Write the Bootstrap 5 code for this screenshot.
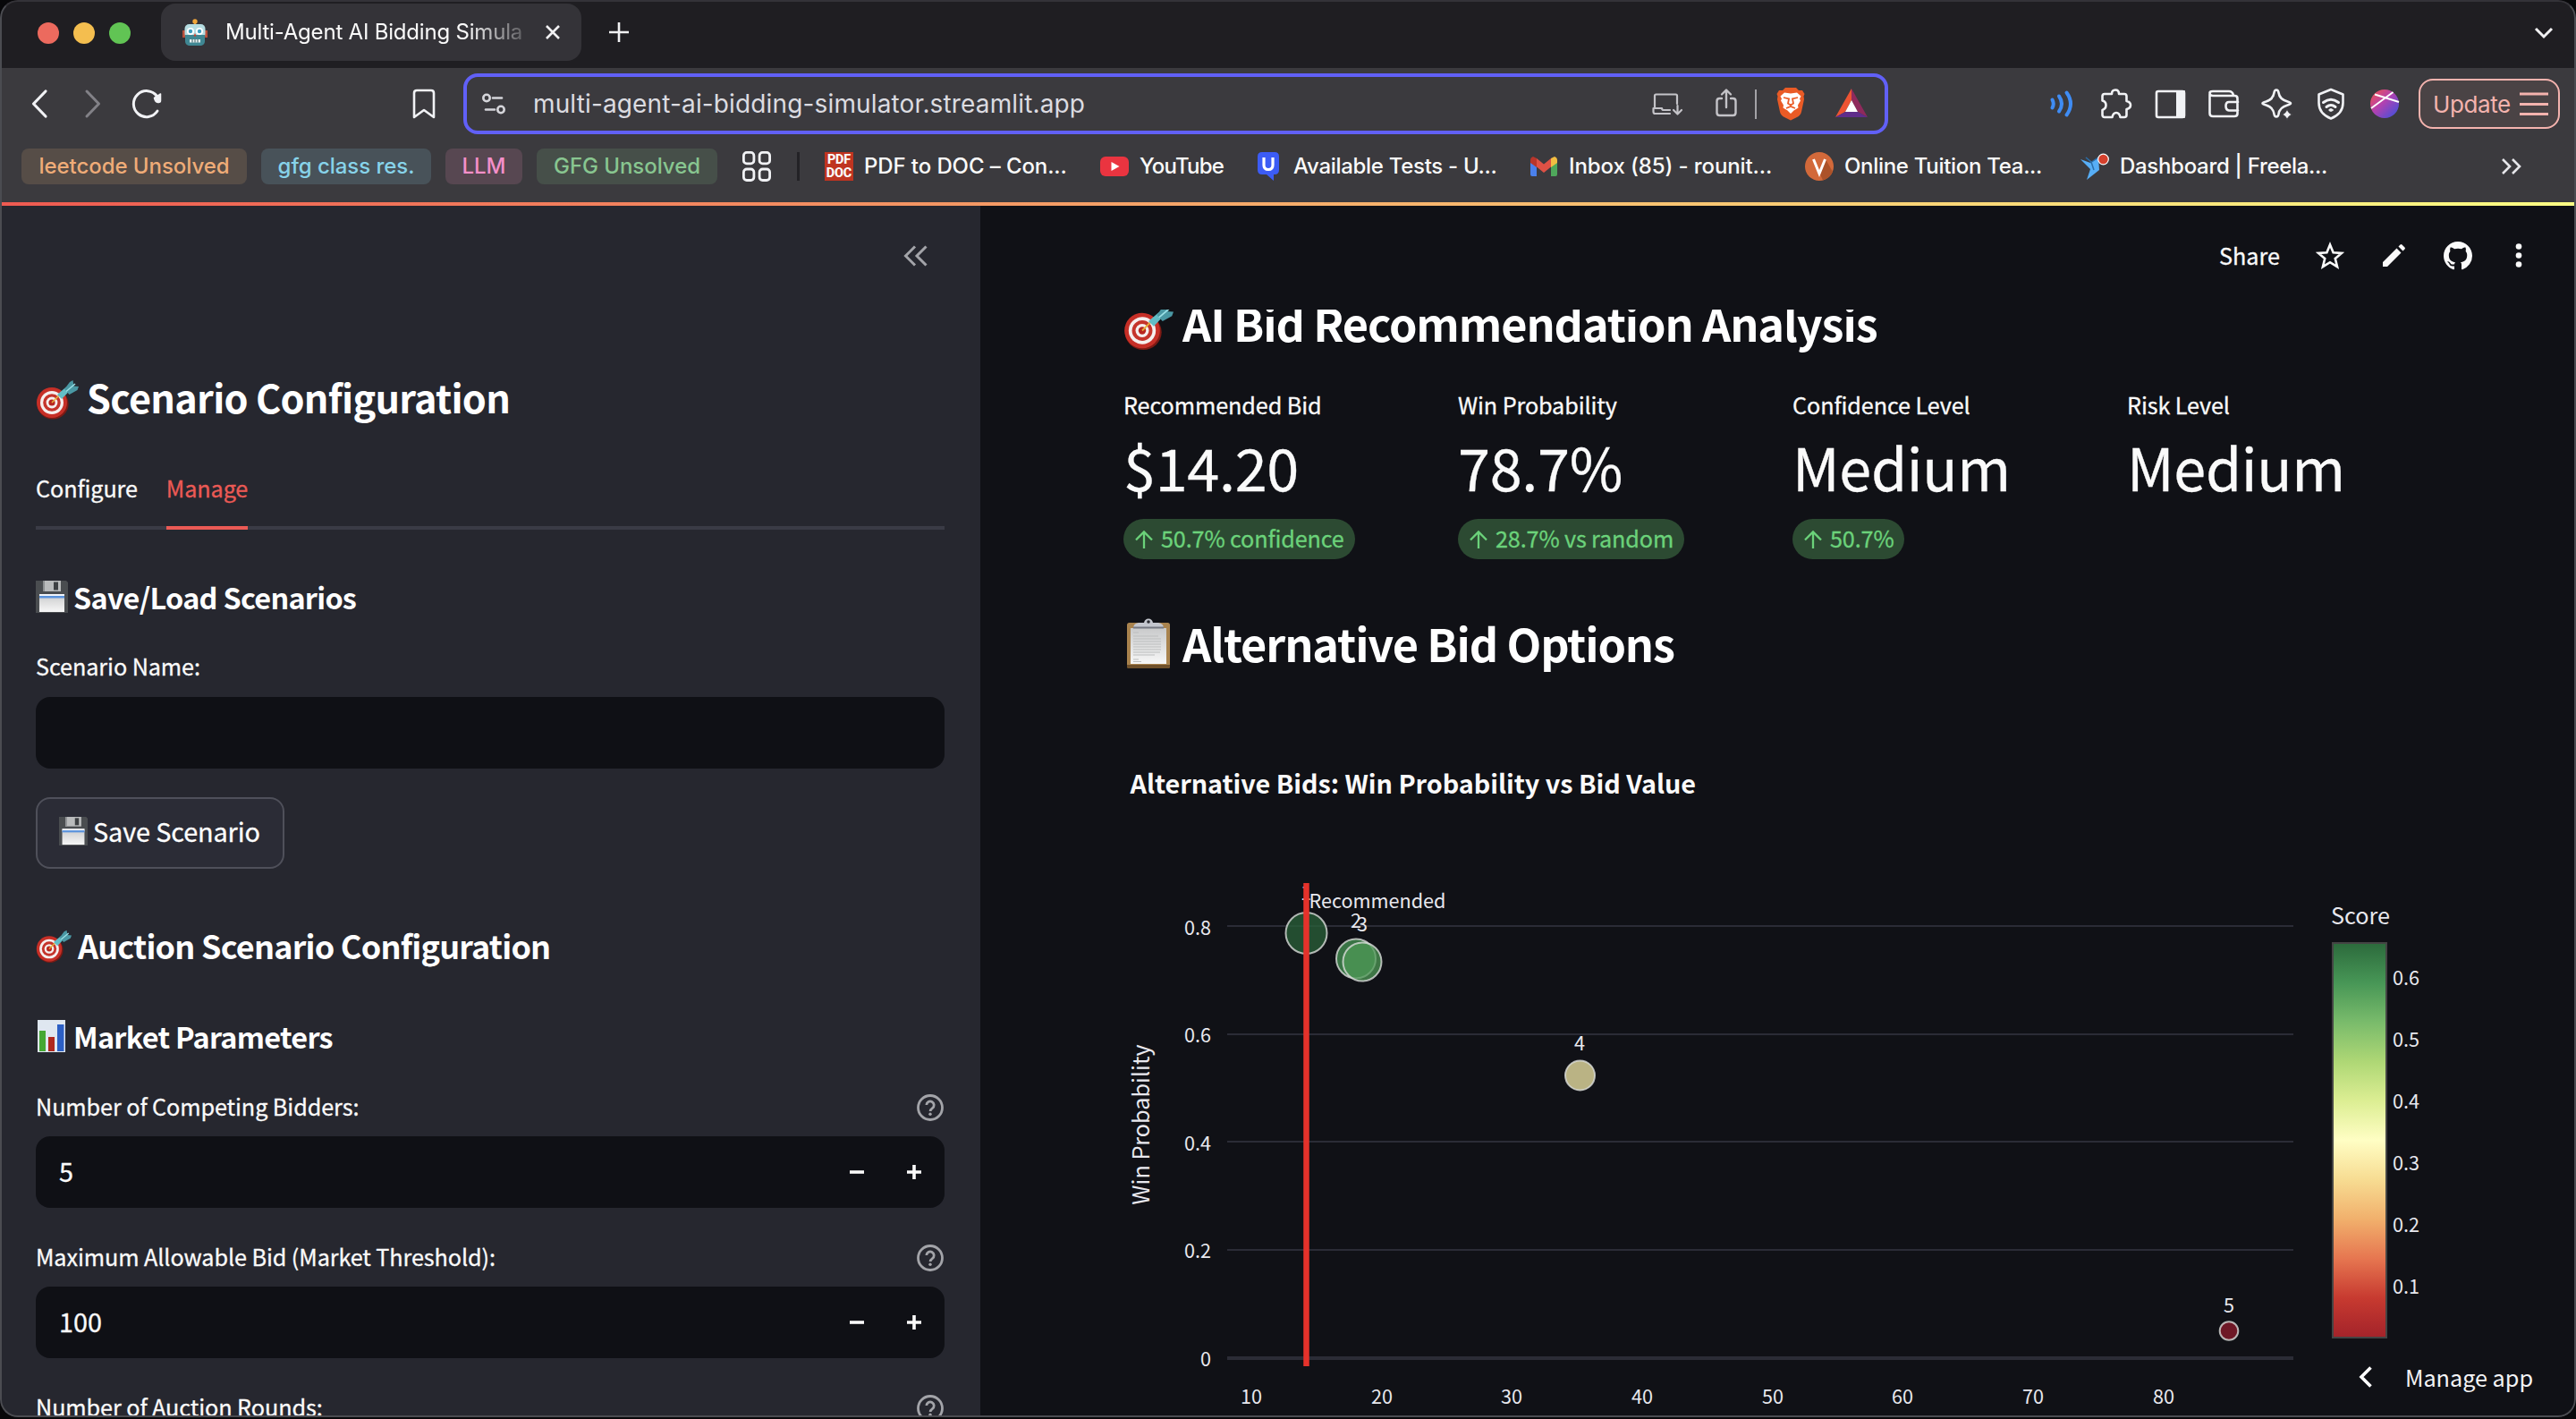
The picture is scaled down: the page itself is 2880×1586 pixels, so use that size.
<!DOCTYPE html>
<html lang="en" data-bs-theme="dark">
<head>
<meta charset="utf-8">
<title>Multi-Agent AI Bidding Simulator</title>
<link href="https://cdn.jsdelivr.net/npm/bootstrap@5.3.0/dist/css/bootstrap.min.css" rel="stylesheet">
<style>
:root{--ui:Inter,"Liberation Sans",sans-serif;--app:"Noto Sans CJK SC","Noto Sans",sans-serif}
body{background:#08080a;width:2880px;height:1586px;overflow:hidden;font-family:var(--app);color:#fafafa}
svg{display:block;flex:none}
.browser{height:1584px;border-radius:20px;overflow:hidden;background:#101116}
.browser::after{content:"";position:absolute;inset:0;border:2px solid #4b4c51;border-top-color:#343338;border-radius:20px;pointer-events:none}
.ic{width:40px;height:40px;fill:none;stroke:#f1f2f5;stroke-width:2.6;stroke-linecap:round;stroke-linejoin:round}
/* tab strip */
.tabstrip{height:76px;background:#1f1e22;font-family:var(--ui);padding-left:42px}
.dots{height:74px;gap:16px}
.dot{width:24px;height:24px;border-radius:50%}
.tab{width:470px;height:64px;border-radius:16px;background:#343338;margin:4px 0 4px 34px;padding-left:24px}
.tabtitle{width:338px;margin-left:20px;font-size:24px;letter-spacing:-.2px;white-space:nowrap;overflow:hidden;-webkit-mask-image:linear-gradient(90deg,#000 80%,rgba(0,0,0,.15));mask-image:linear-gradient(90deg,#000 80%,rgba(0,0,0,.15))}
/* toolbar */
.toolbar{height:150px;background:#3b3a3e;font-family:var(--ui)}
.navrow{height:80px;padding:0 18px 0 24px}
.navset{gap:20px}
.markbtn{margin:0 24px 0 270px}
.urlbox{width:1593px;height:68px;border:4px solid #6160f7;border-radius:16px;padding:0 17px 0 10px}
.url{font-size:28px;letter-spacing:.14px;color:#dcdce1;margin-left:24px;white-space:nowrap}
.sep{width:2px;height:33px;background:#a3a2a7;margin:0 18px 0 12px}
.updatebtn{width:158px;height:56px;border:2px solid #f4b3ae;border-radius:16px;background:#4a4345;color:#f4b3ae;font-size:26px;letter-spacing:-.4px;margin-left:18px;padding:0 10px 0 14px}
.marks{height:60px;padding-left:24px;font-size:24px;font-weight:500;letter-spacing:-.3px;white-space:nowrap}
.chip{height:40px;border-radius:8px;letter-spacing:-.05px;margin-right:16px}
.c1{width:252px;background:#564d47;color:#efac78}
.c2{width:190px;background:#485259;color:#87d3ea}
.c3{width:86px;background:#574751;color:#f48fc9}
.c4{width:202px;background:#464f49;color:#88c690;margin-right:28px}
.bar{width:3px;height:32px;background:#232226;margin:0 28px 0 29px}
.bm{width:308px;gap:12px}
.bm-s{width:172px;letter-spacing:-.8px}
.bm-w{letter-spacing:-.1px}
.pdf{width:32px;height:32px;background:#bf3420;font:800 14.5px/15px Roboto,sans-serif;letter-spacing:-.2px;text-align:center;padding-top:1px}
.rainbow{height:4px;background:linear-gradient(90deg,#ee5a51,#ffff84)}
/* sidebar */
.side{width:1096px;background:#26272f;padding:0 40px;-webkit-text-stroke:.3px}
.collapse-row{height:112px;padding-right:18px}
.h-a,.h-b,.h-c,.h-m{font-weight:700;margin:0;white-space:nowrap;-webkit-text-stroke:0}
.h-a{font-size:43.2px;line-height:80px;margin-top:61px;gap:9px;letter-spacing:-.017em}
.h-a svg{margin-top:8px}
.h-b{font-size:32.4px;line-height:44px;gap:6px;letter-spacing:-.022em}
.h-c{font-size:36px;line-height:48px;gap:7px;margin-top:61px;letter-spacing:-.022em}
.h-c svg{margin-top:4px}
.mt-save{margin-top:53px}.mt-market{margin-top:56px}
.tabs{margin-top:42px;border-bottom:4px solid #3a3b46;gap:32px;font-size:25.2px;line-height:40px}
.tabs .nav-link{color:#fafafa;padding:0 0 23px;margin-bottom:-4px;border-bottom:4px solid transparent;letter-spacing:-.1px}
.tabs .nav-link.active{color:#eb5a55;border-color:#eb5a55}
.lab{font-size:25.2px;line-height:40px;letter-spacing:-.08px;height:40px}
.lab svg{margin:4px 1px 0 0}
.lab1{margin-top:35px}.lab2{margin-top:36px}.lab3{margin-top:34px}
.field{height:80px;border-radius:16px;background:#0f1015;margin-top:14px;padding:0 25px 3px 26px;font-size:28.8px}
.field-first{margin-top:15px}
.steps{gap:46px;padding-top:3px}
.savebtn{width:278px;height:80px;border:2px solid #4f505a;border-radius:16px;background:#2b2c36;margin-top:32px;font-size:28.8px;letter-spacing:-.1px;padding:0 24px 4px;gap:6px;-webkit-text-stroke:.3px}
/* main */
.main{background:#101116;-webkit-text-stroke:.3px}
.apphead{height:116px;padding:0 44px 5px 0;font-size:25.2px}
.scroll{padding-left:160px}
.h-m{font-size:50.4px;line-height:60px;gap:10px;letter-spacing:-.022em}
.h-m1{margin-top:-15px}.h-m1 svg{margin:5px 0 -5px}
.h-m2{margin-top:64px;margin-bottom:-1px}
.metrics{margin-top:41px}
.metric{width:374px}
.mlab{font-size:25.2px;line-height:40px;letter-spacing:-.1px}
.mval{font-size:64.8px;line-height:72px;margin-top:13px;letter-spacing:-.3px}
.delta{height:45px;border-radius:23px;background:#2c4a32;color:#6bd27a;font-size:25.2px;letter-spacing:-.14px;margin-top:23px;padding:0 12px 2px;gap:8px}
.delta svg{margin-top:2px}
.chart text{font-family:var(--app);fill:#e8e8ee;font-size:21.6px}
.chart .big{font-size:25.2px}
.chart .ttl{font-size:28.8px;font-weight:700;fill:#fafafa;letter-spacing:-.05px}
.manage{position:absolute;right:48px;bottom:25px;font-size:25.2px;line-height:40px;gap:36px;color:#f3f3f5}
</style>
</head>
<body>
<svg width="0" height="0" class="position-absolute">
  <defs>
    <symbol id="target" viewBox="0 0 48 48">
      <ellipse cx="19" cy="28.5" rx="17.6" ry="17" fill="#7c1a14"/>
      <circle cx="18" cy="27" r="17" fill="#c62f27"/><circle cx="18" cy="27" r="13" fill="#f5efee"/>
      <circle cx="18" cy="27" r="9.8" fill="#c5342b"/><circle cx="18" cy="27" r="6.4" fill="#f5efee"/><circle cx="18" cy="27" r="3.6" fill="#b8261f"/>
      <path d="M18 27l8-8" stroke="#e6b13a" stroke-width="1.6"/>
      <path d="M24 18l10-8.500 4 4L29 23z" fill="#62bdc6"/>
      <path d="M32 12l6-8 3.500-2 1 6.500 5.500.5-1.500 4-9 5z" fill="#4a98a4"/>
      <path d="M34 14.500L44 6" stroke="#9be0e6" stroke-width="1.500"/>
    </symbol>
    <linearGradient id="paper" x2="0" y2="1"><stop offset="0" stop-color="#c9cacb"/><stop offset="1" stop-color="#f7f7f7"/></linearGradient>
    <symbol id="floppy" viewBox="0 0 36 36">
      <path d="M0 0h34l2 2v34H0z" fill="#4a4d50"/><path d="M8 0h20v12H8z" fill="#b9bbbc"/><path d="M8 0h2v12H8z" fill="#8d9092"/><path d="M20 1.500h5v9h-5z" fill="#3d4043"/>
      <path d="M4 15h28v20H4z" fill="url(#paper)"/><path d="M4 15h28v3H4z" fill="#f2f5fa"/><path d="M4 17h28v2.500H4z" fill="#5b93dc"/>
    </symbol>
    <symbol id="bars" viewBox="0 0 36 36">
      <path d="M2 0h31v36H2z" fill="#dfe7f0"/><path d="M4 12h7v23H4z" fill="#45a833"/><path d="M14 19h7v16h-7z" fill="#b0281e"/><path d="M24 5h7.500v30H24z" fill="#2c5fc4"/>
    </symbol>
    <symbol id="clip" viewBox="0 0 56 56">
      <rect x="4" y="5" width="48" height="51" rx="2.500" fill="#a9834e"/><path d="M4 52h48v2q0 2-2 2H6q-2 0-2-2z" fill="#6f502a"/>
      <path d="M8 11h40v40H8z" fill="url(#paper)"/>
      <path d="M11 16h6M11 20h28M11 23h31M11 26h31M11 29h31M11 32h31M11 35h31M11 38h30M11 41h24M11 46h6M11 48.500h9" stroke="#bcbdbe" stroke-width="1.200"/>
      <path d="M11 11q0-5 6-6h6q1-4.500 5-4.500T33 5h6q6 1 6 6z" fill="#c3c6ce"/><path d="M11 9.500h34v2H11z" fill="#757882"/><circle cx="28" cy="4" r="1.800" fill="#2a2b32"/>
    </symbol>
    <symbol id="help" viewBox="0 0 30 30"><g fill="none" stroke="#a3a4a9" stroke-width="2.800"><circle cx="15" cy="15" r="13.500"/><path d="M10.800 12a4.200 4.200 0 1 1 6.600 3.600c-1.700 1.200-2.300 1.900-2.300 3.400"/></g><circle cx="15" cy="22.200" r="1.700" fill="#a3a4a9"/></symbol>
    <symbol id="minus" viewBox="0 0 18 18"><path d="M1 7.200h16v3.600H1z" fill="#fafafa"/></symbol>
    <symbol id="plus" viewBox="0 0 18 18"><path d="M1 7.200h6.200V1h3.600v6.200H17v3.600h-6.200V17H7.200v-6.200H1z" fill="#fafafa"/></symbol>
    <symbol id="up" viewBox="0 0 22 22"><path d="M11 21V3M2 11.500L11 2.500l9 9" fill="none" stroke="#6bd27a" stroke-width="2.300"/></symbol>
    <linearGradient id="orb" x2="1" y2="1"><stop offset=".1" stop-color="#e8505c"/><stop offset=".45" stop-color="#b341b0"/><stop offset=".9" stop-color="#4b4fd8"/></linearGradient>
    <linearGradient id="scale" x1="0" y1="1" x2="0" y2="0">
      <stop offset="0" stop-color="#a3232a"/><stop offset=".1" stop-color="#c73a30"/><stop offset=".2" stop-color="#e67650"/><stop offset=".3" stop-color="#f1b06c"/><stop offset=".4" stop-color="#f7dc92"/><stop offset=".5" stop-color="#fffec4"/><stop offset=".6" stop-color="#dcee93"/><stop offset=".7" stop-color="#aed775"/><stop offset=".8" stop-color="#79bb6b"/><stop offset=".9" stop-color="#479656"/><stop offset="1" stop-color="#2c6a3c"/>
    </linearGradient>
  </defs>
</svg>

<div class="browser position-relative d-flex flex-column">
  <div class="tabstrip d-flex align-items-start flex-shrink-0">
    <div class="dots d-flex align-items-center">
      <span class="dot" style="background:#ec6a5e"></span><span class="dot" style="background:#f4be4f"></span><span class="dot" style="background:#61c454"></span>
    </div>
    <div class="tab d-flex align-items-center">
      <svg width="28" height="30" viewBox="0 0 28 30"><path d="M13 5h2v5h-2z" fill="#d8a23a"/><circle cx="14" cy="3" r="2.700" fill="#f0a63a"/><path d="M0 13h3v8H0zM25 13h3v8h-3z" fill="#b9503c"/><rect x="2.500" y="6" width="23" height="16" rx="5" fill="#b5dde2"/><path d="M3 18h22v7q0 4-4 5H7q-4-1-4-5z" fill="#3f8793"/><circle cx="9" cy="14" r="4" fill="#fff"/><circle cx="19" cy="14" r="4" fill="#fff"/><circle cx="9" cy="14" r="2.200" fill="#3f9fc0"/><circle cx="19" cy="14" r="2.200" fill="#3f9fc0"/><path d="M12.500 19.500l1.500-3.500 1.500 3.500z" fill="#c8402e"/><path d="M8 23h12v3.500H8z" fill="#e6f1f1"/><path d="M11 23v3.500M14 23v3.500M17 23v3.500" stroke="#3a5f66" stroke-width="1"/></svg>
      <span class="tabtitle">Multi-Agent AI Bidding Simula</span>
      <svg class="ms-auto" style="margin-right:24px" width="16" height="16" viewBox="0 0 16 16"><path d="M1 1l14 14M15 1L1 15" stroke="#f1f1f3" stroke-width="2.600" /></svg>
    </div>
    <svg style="margin:25px 0 0 31px" width="22" height="22" viewBox="0 0 22 22"><path d="M11 0v22M0 11h22" stroke="#f1f1f3" stroke-width="2.600"/></svg>
    <svg class="ms-auto" style="margin:29px 25px 0 0" width="22" height="16" viewBox="0 0 22 16"><path d="M2 3l9 9 9-9" fill="none" stroke="#f1f1f3" stroke-width="3"/></svg>
  </div>

  <div class="toolbar flex-shrink-0">
    <div class="navrow d-flex align-items-center">
      <div class="navset d-flex">
        <svg class="ic" viewBox="0 0 40 40" style="stroke-width:3.200"><path d="M27 6L13.500 20 27 34"/></svg>
        <svg class="ic" viewBox="0 0 40 40" style="stroke-width:3;stroke:#828187"><path d="M13 6l13.500 14L13 34"/></svg>
        <svg class="ic" viewBox="0 0 40 40" style="stroke-width:3"><path d="M31.500 11.500A14.500 14.500 0 1 0 32 28"/><path d="M35.500 9v7.500q0 2.500-3 2t-4-5z" fill="#f1f2f5" stroke-width="1.500"/></svg>
      </div>
      <svg class="ic markbtn" viewBox="0 0 40 40"><path d="M9 35V8q0-3 3-3h16q3 0 3 3v27l-11-8z"/></svg>
      <div class="urlbox d-flex align-items-center">
        <svg class="ic" viewBox="0 0 40 40" style="stroke:#d5d5da"><circle cx="12" cy="13.500" r="3.700"/><path d="M19 13.500h10"/><circle cx="28" cy="26.500" r="3.700"/><path d="M11 26.500h10"/></svg>
        <span class="url">multi-agent-ai-bidding-simulator.streamlit.app</span>
        <div class="d-flex align-items-center ms-auto">
          <svg class="ic" viewBox="0 0 40 40" style="stroke:#c4c3c8;stroke-width:2.200"><path d="M31 20V11q0-1.500-1.500-1.500h-22Q6 9.500 6 11v14M6 25H4.500v4q0 2 2 2H23M6 25h8q0 2 2 2h7M31.500 22v9M27 27l4.500 4.500L36 27"/></svg>
          <svg class="ic" viewBox="0 0 40 40" style="margin-left:26px;stroke:#c4c3c8;stroke-width:2.400"><path d="M15 14h-2.500Q9.500 14 9.500 17v13q0 3 3 3h15q3 0 3-3V17q0-3-3-3H25M20 24V5M15 9.500L20 4.500l5 5"/></svg>
          <span class="sep"></span>
          <svg width="40" height="40" viewBox="0 0 40 40"><path d="M14 2h12l3 3h4l2.500 4-1 2.500.5 3.500-3 14q-1 4-5 6l-7 3.500-7-3.500q-4-2-5-6L5 15l.5-3.500-1-2.500L7 5h4z" fill="#ea5b26"/><path d="M13 7.500l7 1 7-1 4.500 4-1.500 3 1 2-3 5 .5 3-5 3-3.500 3.500-3.500-3.500-5-3 .5-3-3-5 1-2-1.500-3z" fill="#fff"/><path d="M12 13l6 1.500-1 5 3 2 3-2-1-5 6-1.500M15 25l5-2 5 2" fill="none" stroke="#ea5b26" stroke-width="1.800"/></svg>
          <svg style="margin-left:28px" width="40" height="40" viewBox="0 0 40 40"><path d="M20 3L2 35l11-6L20 16z" fill="#ed5433"/><path d="M20 3l18 32-11-6-7-13z" fill="#8f2a5c"/><path d="M2 35h36l-11-6H13z" fill="#5f2d8a"/><path d="M20 16l7 13H13z" fill="#fff"/></svg>
        </div>
      </div>
      <div class="navset d-flex align-items-center ms-auto">
        <svg class="ic" viewBox="0 0 40 40" style="stroke:#3f8cf4;stroke-width:4"><path d="M8.500 15.500q2.500 4.500 0 9M16 11.500q6 8.500 0 17M24.500 7.500q9 12.500 0 25"/></svg>
        <svg class="ic" viewBox="0 0 40 40"><path d="M15 9q0-4.500 4-4.500T23 9h6q2.500 0 2.500 2.500V17q4.500 1 4.500 4.500T31.500 26v6.500Q31.500 35 29 35h-4.500q-1-5-4.500-5t-4.500 5H7q-2.500 0-2.500-2.500V27q4-1.500 4-5.500t-4-5V11.500Q4.500 9 7 9z"/></svg>
        <svg class="ic" viewBox="0 0 40 40"><rect x="5" y="6" width="31" height="29" rx="2"/><path d="M28 6h8v29h-8z" fill="#f1f2f5" stroke-width="2"/></svg>
        <svg class="ic" viewBox="0 0 40 40"><path d="M4.500 9.500v21q0 3.500 3.500 3.500h24q3.500 0 3.500-3V14q0-3-3-3H8q-3.500 0-3.500-3Q4.500 6 8 6h18q4 0 5 4.500M36 18H26q-3.500 0-3.500 4.500T26 27.500h10"/></svg>
        <svg class="ic" viewBox="0 0 40 40"><path d="M19 4.500q2 0 2.500 3 1 7.500 10 10 3.500 1 3.500 2t-3.500 2q-9 2.500-10 10-.5 3-2.500 3t-2.500-3q-1-7.500-9-10-4-1-4-2t4-2q8-2.500 9-10 .5-3 2.500-3z"/><path d="M31 25.500q1 5.500 6.500 6.500-5.500 1-6.500 6.500-1-5.500-6.500-6.500 5.500-1 6.500-6.500z" fill="#f1f2f5" stroke="#3b3a3e" stroke-width="1"/></svg>
        <svg class="ic" viewBox="0 0 40 40"><path d="M20 4l13.500 5.500V19q0 12-13.500 17.500Q6.500 31 6.500 19V9.500z"/><path d="M11.500 18.500q8.500-6.500 17 0M15 23.500q5-4 10 0" stroke-width="3"/><ellipse cx="20" cy="27" rx="2.200" ry="1.300" fill="#f1f2f5" stroke-width="1"/></svg>
        <svg width="40" height="40" viewBox="0 0 40 40"><circle cx="20" cy="20" r="16" fill="url(#orb)"/><path d="M9 9.500l27 8.500M5 25L29.500 7" stroke="#fff" stroke-width="1.900"/></svg>
      </div>
      <button class="updatebtn d-flex align-items-center justify-content-between">Update
        <svg width="34" height="28" viewBox="0 0 34 28"><path d="M1 3h32M1 14.500h32M1 25.500h32" stroke="#f4b3ae" stroke-width="2.800"/></svg>
      </button>
    </div>
    <div class="marks d-flex align-items-center">
      <span class="chip c1 d-flex align-items-center justify-content-center">leetcode Unsolved</span>
      <span class="chip c2 d-flex align-items-center justify-content-center">gfg class res.</span>
      <span class="chip c3 d-flex align-items-center justify-content-center">LLM</span>
      <span class="chip c4 d-flex align-items-center justify-content-center">GFG Unsolved</span>
      <svg width="32" height="34" viewBox="0 0 32 34"><g fill="none" stroke="#f1f2f5" stroke-width="2.800"><rect x="1.400" y="1.400" width="11.500" height="12.500" rx="3.500"/><rect x="19.100" y="1.400" width="11.500" height="12.500" rx="3.500"/><rect x="1.400" y="20" width="11.500" height="12.500" rx="3.500"/><rect x="19.100" y="20" width="11.500" height="12.500" rx="3.500"/></g></svg>
      <span class="bar"></span>
      <span class="bm bm-w d-flex align-items-center"><span class="pdf">PDF<br>DOC</span>PDF to DOC – Con...</span>
      <span class="bm bm-s d-flex align-items-center"><svg width="32" height="22" viewBox="0 0 32 22"><rect width="32" height="22" rx="6" fill="#ea3440"/><path d="M12.500 6l9 5-9 5z" fill="#fff"/></svg>YouTube</span>
      <span class="bm d-flex align-items-center"><svg width="32" height="32" viewBox="0 0 32 32"><path d="M9 0h14q5 0 5 5v15q0 5-5 5h-1v7l-8-7H9q-5 0-5-5V5q0-5 5-5z" fill="#3c5cf5"/><path d="M11 6v8.500q0 5 5 5t5-5V6" fill="none" stroke="#fff" stroke-width="3.200"/></svg>Available Tests - U...</span>
      <span class="bm bm-w d-flex align-items-center"><svg width="32" height="22" viewBox="0 0 32 22"><path d="M1 4l7 5v13H3q-2 0-2-2z" fill="#4a80ec"/><path d="M31 4l-7 5v13h5q2 0 2-2z" fill="#4fa75b"/><path d="M24 2l4-2q3 1 3 4v3l-7 5z" fill="#f2bd42"/><path d="M1 7V4q0-3 3-4l4 2v10z" fill="#b8352b"/><path d="M8 2l8 6.500L24 2v9.500l-8 6.500-8-6.500z" fill="#de5145"/></svg>Inbox (85) - rounit...</span>
      <span class="bm d-flex align-items-center"><svg width="32" height="32" viewBox="0 0 32 32"><circle cx="16" cy="16" r="16" fill="#d2693a"/><path d="M17 25l6-17 8 14q-4 8-11 9.500z" fill="#ac5229"/><path d="M9.500 8L16 24l6.500-16" fill="none" stroke="#fff" stroke-width="3"/></svg>Online Tuition Tea...</span>
      <span class="bm d-flex align-items-center"><svg width="32" height="32" viewBox="0 0 32 32"><path d="M0 8l11 4 9-6 1 14L7 31l4-12z" fill="#57aef6"/><path d="M6 6l6 5 3 9M11 12l9-6" stroke="#2c6ea8" stroke-width="1.500" fill="none"/><circle cx="25.500" cy="8" r="5.800" fill="#d6412d" stroke="#fff" stroke-width="1.200"/></svg>Dashboard | Freela...</span>
      <svg class="ms-auto" style="margin-right:60px" width="24" height="18" viewBox="0 0 24 18"><path d="M2 1l8 8-8 8M13 1l8 8-8 8" fill="none" stroke="#e6e6ea" stroke-width="2.600"/></svg>
    </div>
  </div>
  <div class="rainbow flex-shrink-0"></div>

  <div class="d-flex flex-grow-1 overflow-hidden">
    <aside class="side flex-shrink-0">
      <div class="collapse-row d-flex align-items-center justify-content-end">
        <svg width="28" height="24" viewBox="0 0 28 24"><path d="M13 1.500L2.500 12 13 22.500M25.500 1.500L15 12l10.500 10.500" fill="none" stroke="#a3a4a9" stroke-width="3"/></svg>
      </div>
      <h2 class="h-a d-flex align-items-center"><svg width="48" height="48"><use href="#target"/></svg>Scenario Configuration</h2>
      <nav class="tabs nav"><a class="nav-link">Configure</a><a class="nav-link active">Manage</a></nav>
      <h3 class="h-b mt-save d-flex align-items-center"><svg width="36" height="36"><use href="#floppy"/></svg>Save/Load Scenarios</h3>
      <div class="lab lab1">Scenario Name:</div>
      <div class="field field-first"></div>
      <button class="savebtn d-flex align-items-center text-white text-nowrap"><svg width="32" height="32"><use href="#floppy"/></svg>Save Scenario</button>
      <h3 class="h-c d-flex align-items-center"><svg width="40" height="40"><use href="#target"/></svg>Auction Scenario Configuration</h3>
      <h4 class="h-b mt-market d-flex align-items-center"><svg width="36" height="36"><use href="#bars"/></svg>Market Parameters</h4>
      <div class="lab lab2 d-flex align-items-center justify-content-between">Number of Competing Bidders:<svg width="30" height="30"><use href="#help"/></svg></div>
      <div class="field d-flex align-items-center justify-content-between">5<span class="steps d-flex"><svg width="18" height="18"><use href="#minus"/></svg><svg width="18" height="18"><use href="#plus"/></svg></span></div>
      <div class="lab lab3 d-flex align-items-center justify-content-between">Maximum Allowable Bid (Market Threshold):<svg width="30" height="30"><use href="#help"/></svg></div>
      <div class="field d-flex align-items-center justify-content-between">100<span class="steps d-flex"><svg width="18" height="18"><use href="#minus"/></svg><svg width="18" height="18"><use href="#plus"/></svg></span></div>
      <div class="lab lab3 d-flex align-items-center justify-content-between">Number of Auction Rounds:<svg width="30" height="30"><use href="#help"/></svg></div>
    </aside>

    <main class="main flex-grow-1 d-flex flex-column overflow-hidden">
      <header class="apphead d-flex align-items-center justify-content-end flex-shrink-0">
        <span>Share</span>
        <svg style="margin-left:40px" width="32" height="32" viewBox="0 0 32 32"><path d="M16 3.500l3.600 8.700 9.400.7-7.200 6.100 2.300 9.200L16 23.200l-8.100 5 2.300-9.200L3 12.900l9.400-.7z" fill="none" stroke="#fafafa" stroke-width="2.600"/></svg>
        <svg style="margin-left:41px" width="28" height="28" viewBox="0 0 28 28"><path d="M2 21L17.500 5.500l5 5L7 26H2zM19.500 3.500l2-2q1-1 2 0l3 3q1 1 0 2l-2 2z" fill="#fafafa"/></svg>
        <svg style="margin-left:42px" width="32" height="32" viewBox="0 0 16 16"><path fill="#fafafa" d="M8 0C3.580 0 0 3.580 0 8c0 3.540 2.290 6.530 5.470 7.590.4.070.55-.17.55-.38 0-.19-.01-.82-.01-1.490-2.010.37-2.530-.49-2.690-.94-.09-.23-.48-.94-.82-1.130-.28-.15-.68-.52-.01-.53.63-.01 1.080.58 1.230.82.72 1.210 1.870.87 2.330.66.07-.52.28-.87.51-1.070-1.780-.2-3.640-.89-3.640-3.950 0-.87.31-1.590.82-2.150-.08-.2-.36-1.020.08-2.120 0 0 .67-.21 2.200.82.64-.18 1.320-.27 2-.27s1.360.09 2 .27c1.530-1.040 2.200-.82 2.200-.82.44 1.100.16 1.920.08 2.120.51.56.82 1.270.82 2.150 0 3.070-1.870 3.750-3.650 3.950.29.25.54.73.54 1.480 0 1.070-.01 1.930-.01 2.200 0 .21.15.46.55.38A8.010 8.010 0 0 0 16 8c0-4.420-3.580-8-8-8"/></svg>
        <svg style="margin-left:32px" width="40" height="32" viewBox="0 0 40 32"><g fill="#fafafa"><circle cx="20" cy="5.500" r="3.300"/><circle cx="20" cy="15.500" r="3.300"/><circle cx="20" cy="25.500" r="3.300"/></g></svg>
      </header>
      <div class="scroll overflow-hidden d-flex flex-column flex-grow-1">
        <h2 class="h-m h-m1 d-flex align-items-center"><svg width="56" height="56"><use href="#target"/></svg>AI Bid Recommendation Analysis</h2>
        <div class="metrics d-flex">
          <div class="metric"><div class="mlab">Recommended Bid</div><div class="mval">$14.20</div><span class="delta d-inline-flex align-items-center"><svg width="22" height="22"><use href="#up"/></svg>50.7% confidence</span></div>
          <div class="metric"><div class="mlab">Win Probability</div><div class="mval">78.7%</div><span class="delta d-inline-flex align-items-center"><svg width="22" height="22"><use href="#up"/></svg>28.7% vs random</span></div>
          <div class="metric"><div class="mlab">Confidence Level</div><div class="mval">Medium</div><span class="delta d-inline-flex align-items-center"><svg width="22" height="22"><use href="#up"/></svg>50.7%</span></div>
          <div class="metric"><div class="mlab">Risk Level</div><div class="mval">Medium</div></div>
        </div>
        <h2 class="h-m h-m2 d-flex align-items-center"><svg width="56" height="56"><use href="#clip"/></svg>Alternative Bid Options</h2>
        <svg class="chart" width="1624" height="838" viewBox="1256 748 1624 838">
          <text x="1263.500" y="887" class="ttl">Alternative Bids: Win Probability vs Bid Value</text>
          <g stroke="#2b2c36" stroke-width="2"><path d="M1372 1035h1192M1372 1156h1192M1372 1276h1192M1372 1397h1192"/><path d="M1372 1518h1192" stroke-width="4"/></g>
          <g text-anchor="end"><text x="1354" y="1044.500">0.8</text><text x="1354" y="1165">0.6</text><text x="1354" y="1285.500">0.4</text><text x="1354" y="1406">0.2</text><text x="1354" y="1526.500">0</text></g>
          <g text-anchor="middle"><text x="1399" y="1569">10</text><text x="1545" y="1569">20</text><text x="1690" y="1569">30</text><text x="1836" y="1569">40</text><text x="1982" y="1569">50</text><text x="2127" y="1569">60</text><text x="2273" y="1569">70</text><text x="2419" y="1569">80</text></g>
          <text class="big" text-anchor="middle" transform="translate(1284.500 1257) rotate(-90)">Win Probability</text>
          <g stroke="#d9dcda" stroke-opacity=".8" stroke-width="2" fill-opacity=".75">
            <circle cx="1460.500" cy="1043" r="23" fill="#296139"/><circle cx="1516" cy="1071.500" r="22" fill="#479656"/><circle cx="1523" cy="1075" r="21.500" fill="#4d9856"/>
            <circle cx="1766.500" cy="1202" r="16.500" fill="#bab384" fill-opacity="1"/><circle cx="2492" cy="1487.500" r="10.300" fill="#6e1826" fill-opacity="1"/>
          </g>
          <g text-anchor="middle"><text x="1460" y="1006">1</text><text x="1516" y="1037">2</text><text x="1523" y="1041">3</text><text x="1766" y="1174">4</text><text x="2492" y="1467">5</text></g>
          <path d="M1460.500 987v540" stroke="#e5322b" stroke-width="6.500"/>
          <text x="1463.500" y="1015">Recommended</text>
          <text class="big" x="2606" y="1033">Score</text>
          <rect x="2608" y="1054" width="60" height="441" fill="url(#scale)" stroke="#444" stroke-width="2"/>
          <g><text x="2675" y="1101">0.6</text><text x="2675" y="1170">0.5</text><text x="2675" y="1239">0.4</text><text x="2675" y="1308">0.3</text><text x="2675" y="1377">0.2</text><text x="2675" y="1446">0.1</text></g>
        </svg>
      </div>
    </main>
  </div>
  <div class="manage d-flex align-items-center"><svg width="16" height="24" viewBox="0 0 16 24"><path d="M13.500 1.500L3 12l10.500 10.500" fill="none" stroke="#fff" stroke-width="3.600"/></svg>Manage app</div>
</div>
<script src="https://cdn.jsdelivr.net/npm/bootstrap@5.3.0/dist/js/bootstrap.bundle.min.js"></script>
</body>
</html>
